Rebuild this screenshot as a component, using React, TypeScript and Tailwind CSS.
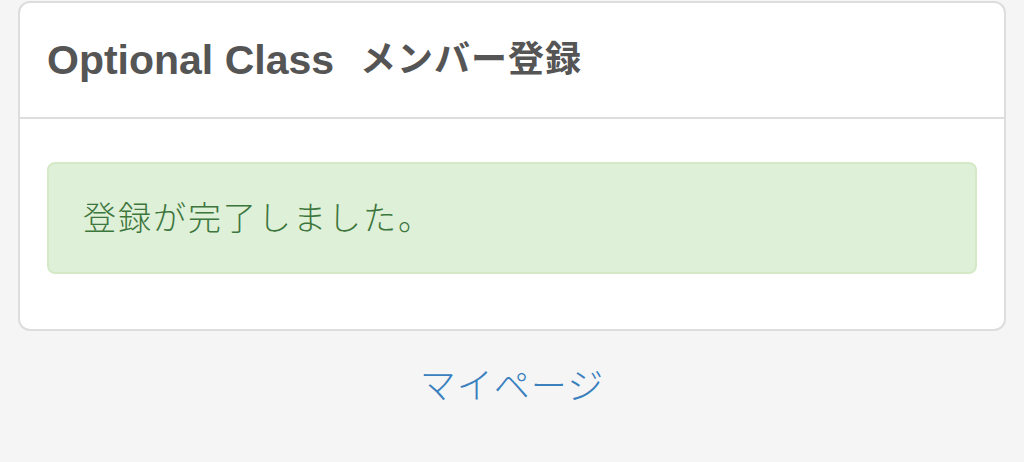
export default function App() {
  const font = { fontFamily: '"Liberation Sans", "Noto Sans CJK JP", sans-serif' };
  return (
    <div className="min-h-screen bg-[#f5f5f5] px-[18px] pt-px" style={font}>
      <div className="rounded-[12px] border-2 border-[#dddddd] bg-white">
        <div className="flex h-[116px] items-center border-b-2 border-[#dddddd] px-[27px]">
          <h3 className="flex items-center text-[41px] font-bold leading-none text-[#555555]">
            <span>Optional Class</span>
            <span className="ml-[26px] text-[36px] tracking-[1px]">メンバー登録</span>
          </h3>
        </div>
        <div className="px-[27px] pb-[55px] pt-[43px]">
          <div className="flex h-[112px] items-center rounded-[8px] border-2 border-[#d6e9c6] bg-[#dff0d8] px-[34px]">
            <p className="text-[33px] font-light leading-none tracking-[2px] text-[#3c763d]">登録が完了しました。</p>
          </div>
        </div>
      </div>
      <div className="mt-[34px] text-center">
        <a href="#" className="text-[36px] font-light leading-[44px] tracking-[1px] text-[#3a80bf]">
          マイページ
        </a>
      </div>
    </div>
  );
}
